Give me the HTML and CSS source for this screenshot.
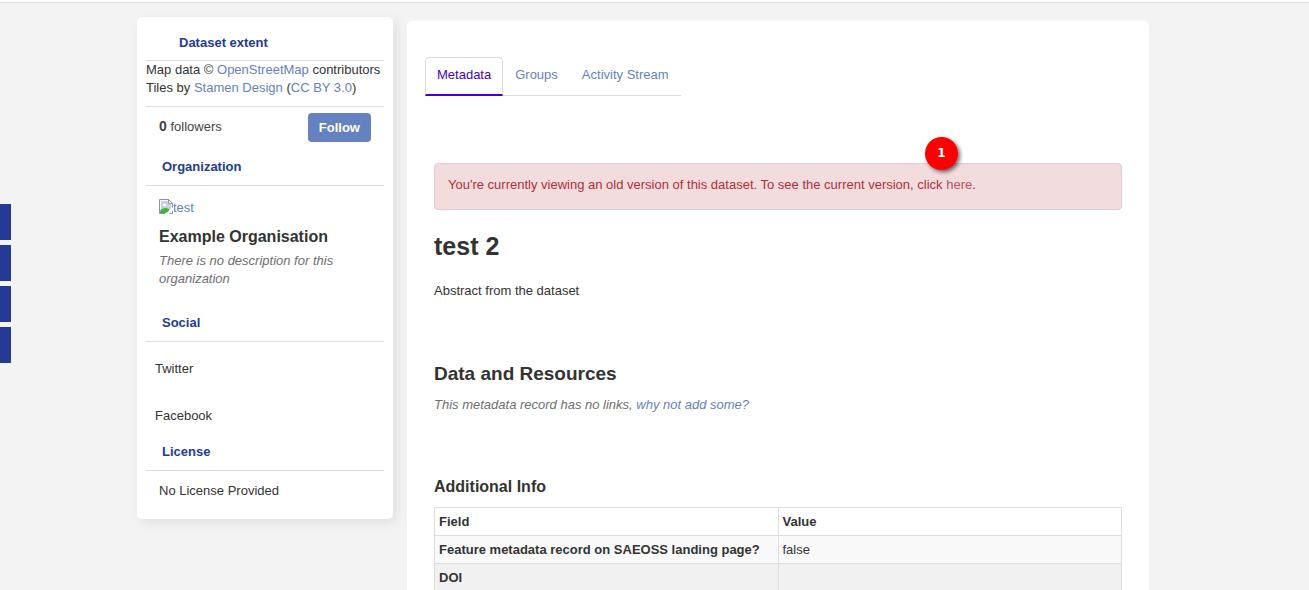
FILE: index.html
```html
<!DOCTYPE html>
<html lang="en">
<head>
<meta charset="utf-8">
<title>test 2</title>
<link rel="stylesheet" href="styles.css">
</head>
<body>
<header class="masthead"></header>
<div class="side-tabs"><span class="side-tab"></span><span class="side-tab"></span><span class="side-tab"></span><span class="side-tab"></span></div>
<div class="wrapper">
  <aside class="sidebar">
    <section>
      <h2 class="heading heading-extent">Dataset extent</h2>
      <p class="attribution">Map data © <a href="#">OpenStreetMap</a> contributors<br>Tiles by <a href="#">Stamen Design</a> (<a href="#">CC BY 3.0</a>)</p>
    </section>
    <section class="follow">
      <p class="count"><strong>0</strong> followers</p>
      <button class="follow-button" type="button">Follow</button>
    </section>
    <section>
      <h2 class="heading">Organization</h2>
      <div class="org">
        <a class="org-image" href="#"><svg class="broken" viewBox="0 0 14 15" aria-hidden="true"><path d="M.5 14.500V.5H10l3.500 3.500v10.500z" fill="#fff"/><path d="M2 2h7v3h3v8H2z" fill="#c3d0f5"/><path d="M3 7c0-1 1-1 1-1 0-2 3-2 3 0 1 0 1 1 1 1z" fill="#fff"/><path d="M1 14v-2c2-3 6-4 9-2v4z" fill="#3cb82f"/><path d="M.5 14.500V.5H10M13.500 4v5M.5 14.500H6M10.500 14.500h3V12" fill="none" stroke="#959595"/><path d="M9.500.5v4h4z" fill="#fff" stroke="#959595"/><path d="M6 15l8-7v2.500L9.500 15z" fill="#fff"/></svg>test</a>
        <h3 class="org-name">Example Organisation</h3>
        <p class="empty">There is no description for this organization</p>
      </div>
    </section>
    <section>
      <h2 class="heading">Social</h2>
      <ul class="social"><li>Twitter</li><li>Facebook</li></ul>
    </section>
    <section>
      <h2 class="heading">License</h2>
      <p class="license">No License Provided</p>
    </section>
  </aside>
  <main class="primary">
    <nav class="tabs"><a class="tab tab-active" href="#">Metadata</a><a class="tab" href="#">Groups</a><a class="tab" href="#">Activity Stream</a></nav>
    <article class="content">
      <div class="alert">You're currently viewing an old version of this dataset. To see the current version, click <a href="#">here</a>.<span class="marker">1</span></div>
      <h1 class="title">test 2</h1>
      <p class="abstract">Abstract from the dataset</p>
      <h2 class="resources-title">Data and Resources</h2>
      <p class="empty">This metadata record has no links, <a href="#">why not add some?</a></p>
      <h3 class="info-title">Additional Info</h3>
      <table class="info">
        <thead><tr><th scope="col">Field</th><th scope="col">Value</th></tr></thead>
        <tbody>
          <tr><th scope="row">Feature metadata record on SAEOSS landing page?</th><td>false</td></tr>
          <tr class="row-shaded"><th scope="row">DOI</th><td></td></tr>
        </tbody>
      </table>
    </article>
  </main>
</div>
</body>
</html>
```
FILE: styles.css
```css
* { box-sizing: border-box; }
body { display: flex; flex-direction: column; height: 100vh; margin: 0; background: #f3f3f3; color: #333; font: 13px/18px "Liberation Sans", Arial, sans-serif; }
h1, h2, h3, p, ul { margin: 0; padding: 0; }
a { color: #6581c2; text-decoration: none; }
.masthead { flex: none; height: 3px; background: #fff; border-bottom: 1px solid #dedeea; }
.side-tabs { position: fixed; left: 0; top: 204px; display: grid; gap: 5px; }
.side-tab { width: 11px; height: 36px; background: #243a94; }
.wrapper { flex: 1; min-height: 0; display: flex; align-items: flex-start; gap: 14px; overflow-y: auto; scrollbar-width: none; padding: 14px 160px 0 137px; }
.sidebar { flex: none; width: 256px; padding: 8px 9px 19px; background: #fff; border-radius: 5px; box-shadow: 4px 4px 12px rgba(0, 0, 0, .08); }
.heading { padding: 9px 16px; border-bottom: 1px solid #ddd; color: #243a94; font-size: 13px; line-height: 18px; }
.heading-extent { padding: 9px 33px 8px; }
.attribution { padding-bottom: 9px; border-bottom: 1px solid #ddd; }
.follow { display: flex; justify-content: space-between; align-items: flex-start; padding: 6px 13px 7px; }
.count { padding-top: 4px; color: #444; }
.count strong { font-size: 14px; }
.follow-button { height: 29px; padding: 0 11px; border: 0; border-radius: 4px; background: #6581c2; color: #fff; font: bold 13px/18px "Liberation Sans", Arial, sans-serif; }
.org { padding: 13px 13px 17px; }
.org-image { display: flex; align-items: flex-start; }
.broken { flex: none; width: 14px; height: 15px; }
.org-name { margin: 8px 0 3px; font-size: 16px; line-height: 24px; }
.empty { color: #6e6e6e; font-style: italic; }
.social { list-style: none; padding: 18px 9px 9px; display: grid; gap: 29px; }
.license { padding: 11px 13px 0; }
.primary { flex: 1; min-width: 0; margin-top: 4px; padding: 36px 27px 0 18px; background: #fff; border-radius: 5px 5px 0 0; }
.tabs { display: flex; width: fit-content; border-bottom: 1px solid #ddd; }
.tab { padding: 8px 11px 10px; border: 1px solid transparent; border-bottom: 0; }
.tab-active { margin-bottom: -1px; border: 1px solid #ddd; border-bottom: 2px solid #4400d4; border-radius: 4px 4px 0 0; color: #4400d4; }
.content { padding: 67px 0 0 9px; }
.alert { position: relative; padding: 12px 13px 15px; border: 1px solid #e6c8cf; border-radius: 4px; background: #f2dcde; color: #b0303a; }
.alert a { color: #b55268; }
.marker { position: absolute; left: 490px; top: -27px; width: 33px; height: 33px; border-radius: 50%; background: #f00; box-shadow: 2px 2px 4px rgba(0, 0, 0, .6); color: #fff; font: bold 12px/33px "DejaVu Sans", sans-serif; text-align: center; }
.title { margin: 19px 0; font-size: 25px; line-height: 34px; }
.abstract { margin-bottom: 62px; }
.resources-title { margin-bottom: 10px; font-size: 19px; line-height: 24px; }
.info-title { margin: 61px 0 8px; font-size: 16px; line-height: 24px; }
.info { width: 100%; table-layout: fixed; border-collapse: collapse; }
.info th, .info td { height: 28px; padding: 4px; border: 1px solid #ddd; text-align: left; }
.info tbody tr { background: #f9f9f9; }
.info .row-shaded { background: #f1f1f1; }
```
